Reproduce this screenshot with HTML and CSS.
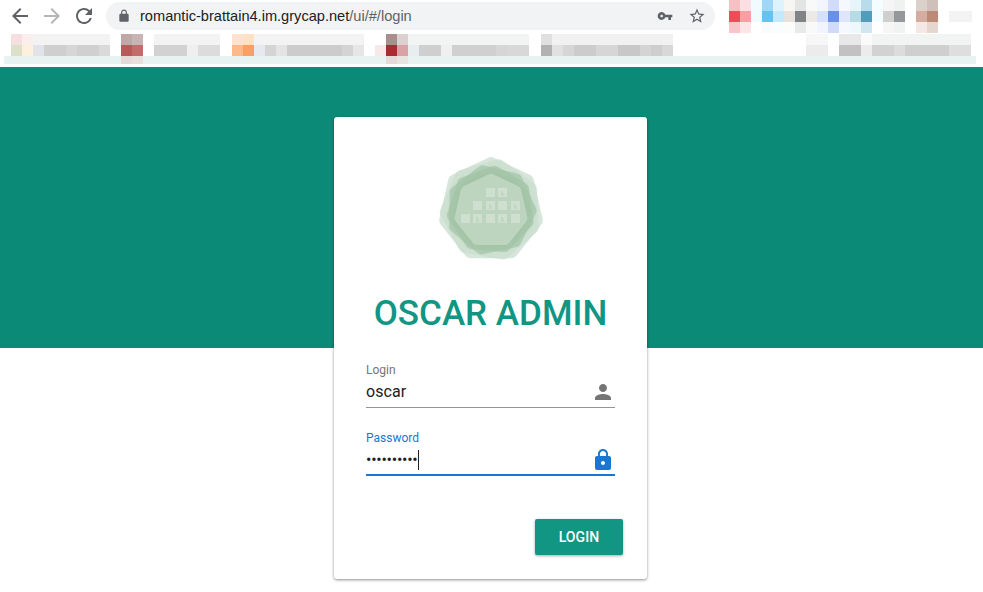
FILE: index.html
```html
<!DOCTYPE html>
<html lang="en">
<head>
  <meta charset="UTF-8">
  <title>OSCAR Admin</title>
  <link rel="stylesheet" href="styles.css">
</head>
<body>

  <header class="browser">
    <div class="toolbar">
      <svg class="nav-icon" viewBox="0 0 24 24"><path d="M20 11H7.83l5.59-5.59L12 4l-8 8 8 8 1.41-1.41L7.83 13H20v-2z"/></svg>
      <svg class="nav-icon nav-off" viewBox="0 0 24 24"><path d="M12 4l-1.41 1.41L16.17 11H4v2h12.17l-5.58 5.59L12 20l8-8z"/></svg>
      <svg class="nav-icon" viewBox="0 0 24 24"><path d="M17.65 6.35A7.958 7.958 0 0 0 12 4c-4.42 0-7.99 3.58-7.99 8s3.57 8 7.99 8c3.73 0 6.84-2.55 7.73-6h-2.08A5.99 5.99 0 0 1 12 18c-3.31 0-6-2.69-6-6s2.69-6 6-6c1.66 0 3.14.69 4.22 1.78L13 11h7V4l-2.35 2.35z"/></svg>
      <div class="omnibox">
        <svg class="lock-icon" viewBox="0 0 24 24"><path d="M18 8h-1V6c0-2.76-2.24-5-5-5S7 3.24 7 6v2H6c-1.1 0-2 .9-2 2v10c0 1.1.9 2 2 2h12c1.1 0 2-.9 2-2V10c0-1.1-.9-2-2-2zM9 6c0-1.66 1.34-3 3-3s3 1.34 3 3v2H9V6z"/></svg>
        <span class="url">romantic-brattain4.im.grycap.net<span class="url-path">/ui/#/login</span></span>
        <svg class="key-icon" viewBox="0 0 24 24"><path d="M12.65 10A5.99 5.99 0 0 0 7 6c-3.31 0-6 2.69-6 6s2.69 6 6 6a5.99 5.99 0 0 0 5.65-4H17v4h4v-4h2v-4H12.65zM7 14c-1.1 0-2-.9-2-2s.9-2 2-2 2 .9 2 2-.9 2-2 2z"/></svg>
        <svg class="star-icon" viewBox="0 0 24 24"><path d="M22 9.24l-7.19-.62L12 2 9.19 8.63 2 9.24l5.46 4.73L5.82 21 12 17.27 18.18 21l-1.63-7.03L22 9.24zM12 15.4l-3.76 2.27 1-4.28-3.32-2.88 4.38-.38L12 6.1l1.71 4.04 4.38.38-3.32 2.88 1 4.28L12 15.4z"/></svg>
      </div>
      <!-- blurred extension icons -->
      <svg class="mosaic-top" width="243" height="33" shape-rendering="crispEdges">
        <rect x="0" y="0" width="11" height="11" fill="#f7c0c4"/><rect x="0" y="11" width="11" height="11" fill="#ee4d57"/><rect x="0" y="22" width="11" height="11" fill="#f9c5ca"/>
        <rect x="11" y="0" width="11" height="11" fill="#fcdfe2"/><rect x="11" y="11" width="11" height="11" fill="#fa9ea4"/><rect x="11" y="22" width="11" height="11" fill="#fde4e6"/>
        <rect x="22" y="0" width="11" height="22" fill="#f0fbff"/>
        <rect x="33" y="0" width="11" height="11" fill="#9fd8f7"/><rect x="33" y="11" width="11" height="11" fill="#66c2f0"/><rect x="33" y="22" width="11" height="11" fill="#f8fcff"/>
        <rect x="44" y="0" width="11" height="11" fill="#dff3fd"/><rect x="44" y="11" width="11" height="11" fill="#c4e9fb"/><rect x="44" y="22" width="11" height="11" fill="#fafdff"/>
        <rect x="55" y="0" width="11" height="11" fill="#f8f6f3"/><rect x="55" y="11" width="11" height="11" fill="#e8e2de"/><rect x="55" y="22" width="11" height="11" fill="#fcfcfb"/>
        <rect x="66" y="0" width="11" height="11" fill="#e3e5e5"/><rect x="66" y="11" width="11" height="11" fill="#808486"/><rect x="66" y="22" width="11" height="11" fill="#e8eaea"/>
        <rect x="77" y="0" width="11" height="11" fill="#f9f9f9"/><rect x="77" y="11" width="11" height="11" fill="#ece9e7"/><rect x="77" y="22" width="11" height="11" fill="#f9f9f9"/>
        <rect x="88" y="0" width="11" height="11" fill="#f2f5fe"/><rect x="88" y="11" width="11" height="11" fill="#d5e0fb"/><rect x="88" y="22" width="11" height="11" fill="#f1f4fe"/>
        <rect x="99" y="0" width="11" height="11" fill="#d0dcf8"/><rect x="99" y="11" width="11" height="11" fill="#6890e4"/><rect x="99" y="22" width="11" height="11" fill="#cfdbf8"/>
        <rect x="110" y="0" width="11" height="11" fill="#f5f8fe"/><rect x="110" y="11" width="11" height="11" fill="#dfe6fc"/><rect x="110" y="22" width="11" height="11" fill="#f5f8fe"/>
        <rect x="121" y="0" width="11" height="11" fill="#e6f5f9"/><rect x="121" y="11" width="11" height="11" fill="#b5dce5"/><rect x="121" y="22" width="11" height="11" fill="#eef7fa"/>
        <rect x="132" y="0" width="11" height="11" fill="#b9dcec"/><rect x="132" y="11" width="11" height="11" fill="#539cbc"/><rect x="132" y="22" width="11" height="11" fill="#d0e7f2"/>
        <rect x="143" y="0" width="11" height="22" fill="#f3fcff"/>
        <rect x="154" y="0" width="11" height="11" fill="#f5f5f5"/><rect x="154" y="11" width="11" height="11" fill="#cfcfcf"/><rect x="154" y="22" width="11" height="11" fill="#f6f6f6"/>
        <rect x="165" y="0" width="11" height="11" fill="#f0f1f1"/><rect x="165" y="11" width="11" height="11" fill="#94989b"/><rect x="165" y="22" width="11" height="11" fill="#f1f2f2"/>
        <rect x="187" y="0" width="11" height="11" fill="#dcd0cb"/><rect x="187" y="11" width="11" height="11" fill="#d3aea0"/><rect x="187" y="22" width="11" height="11" fill="#f5e8e4"/>
        <rect x="198" y="0" width="11" height="11" fill="#cfc0b9"/><rect x="198" y="11" width="11" height="11" fill="#bd8a78"/><rect x="198" y="22" width="11" height="11" fill="#e5d6d0"/>
        <rect x="220" y="11" width="23" height="11" fill="#f2f3f2"/>
      </svg>
    </div>
    <!-- blurred bookmarks bar -->
    <svg class="mosaic-bar" width="983" height="33" shape-rendering="crispEdges">
      <rect x="4" y="22" width="972" height="8" fill="#e8f2f0"/>
      <rect x="11" y="0" width="11" height="11" fill="#f5dfe0"/><rect x="11" y="11" width="11" height="11" fill="#dde0c8"/>
      <rect x="22" y="0" width="11" height="11" fill="#fbeeef"/><rect x="22" y="11" width="11" height="11" fill="#fdf0dc"/>
      <rect x="33" y="0" width="77" height="11" fill="#f3f3f3"/>
      <rect x="33" y="11" width="11" height="11" fill="#e1e3e8"/><rect x="44" y="11" width="22" height="11" fill="#cfcfcf"/><rect x="66" y="11" width="11" height="11" fill="#d6d6d6"/><rect x="77" y="11" width="22" height="11" fill="#d0d0d0"/><rect x="99" y="11" width="11" height="11" fill="#dadada"/>
      <rect x="121" y="0" width="11" height="11" fill="#c0a8a8"/><rect x="121" y="11" width="11" height="11" fill="#b75a5a"/><rect x="121" y="22" width="11" height="8" fill="#e6dad8"/>
      <rect x="132" y="0" width="11" height="11" fill="#c8b4b4"/><rect x="132" y="11" width="11" height="11" fill="#c46c6c"/><rect x="132" y="22" width="11" height="8" fill="#e8dedc"/>
      <rect x="154" y="0" width="66" height="11" fill="#f3f3f3"/>
      <rect x="154" y="11" width="33" height="11" fill="#d2d2d2"/><rect x="187" y="11" width="11" height="11" fill="#efefef"/><rect x="198" y="11" width="22" height="11" fill="#dcdcdc"/>
      <rect x="232" y="0" width="11" height="11" fill="#fde3cf"/><rect x="232" y="11" width="11" height="11" fill="#fdb98a"/>
      <rect x="243" y="0" width="11" height="11" fill="#fde0c6"/><rect x="243" y="11" width="11" height="11" fill="#fb9f63"/>
      <rect x="254" y="0" width="110" height="11" fill="#f3f3f3"/>
      <rect x="254" y="11" width="11" height="11" fill="#e6e9ef"/><rect x="265" y="11" width="11" height="11" fill="#d4d4d4"/><rect x="276" y="11" width="11" height="11" fill="#e4e4e4"/><rect x="287" y="11" width="55" height="11" fill="#cccccc"/><rect x="342" y="11" width="11" height="11" fill="#d4d4d4"/><rect x="353" y="11" width="11" height="11" fill="#e6e6e6"/>
      <rect x="375" y="11" width="11" height="11" fill="#f9e8e8"/>
      <rect x="386" y="0" width="11" height="11" fill="#a98e8e"/><rect x="386" y="11" width="11" height="11" fill="#a52f30"/><rect x="386" y="22" width="11" height="8" fill="#e6dad8"/>
      <rect x="397" y="0" width="11" height="11" fill="#ddd0d0"/><rect x="397" y="11" width="11" height="11" fill="#d9a3a5"/><rect x="397" y="22" width="11" height="8" fill="#e8e4e2"/>
      <rect x="408" y="0" width="121" height="11" fill="#f2f3f3"/>
      <rect x="408" y="11" width="11" height="11" fill="#e8eef0"/><rect x="419" y="11" width="22" height="11" fill="#cfcfcf"/><rect x="441" y="11" width="11" height="11" fill="#f0f0f0"/><rect x="452" y="11" width="44" height="11" fill="#d0d0d0"/><rect x="496" y="11" width="11" height="11" fill="#d6d6d6"/><rect x="507" y="11" width="22" height="11" fill="#d8d8d8"/>
      <rect x="541" y="0" width="11" height="11" fill="#e0e0e0"/><rect x="541" y="11" width="11" height="11" fill="#b2b2b2"/>
      <rect x="552" y="0" width="121" height="11" fill="#f0f1f0"/>
      <rect x="552" y="11" width="11" height="11" fill="#e2e0e0"/><rect x="563" y="11" width="11" height="11" fill="#d6d6d6"/><rect x="574" y="11" width="22" height="11" fill="#cccccc"/><rect x="596" y="11" width="22" height="11" fill="#d6d6d6"/><rect x="618" y="11" width="22" height="11" fill="#c8c8c8"/><rect x="640" y="11" width="11" height="11" fill="#d4d4d4"/><rect x="651" y="11" width="11" height="11" fill="#cecece"/><rect x="662" y="11" width="11" height="11" fill="#d8d8d8"/>
      <rect x="806" y="0" width="22" height="11" fill="#f7f7f7"/><rect x="806" y="11" width="22" height="11" fill="#ececec"/>
      <rect x="839" y="0" width="22" height="11" fill="#e8e8e8"/><rect x="839" y="11" width="22" height="11" fill="#c2c2c2"/>
      <rect x="861" y="0" width="11" height="11" fill="#fafafa"/><rect x="861" y="11" width="11" height="11" fill="#ececec"/>
      <rect x="872" y="0" width="99" height="11" fill="#f2f3f3"/>
      <rect x="872" y="11" width="22" height="11" fill="#d2d2d2"/><rect x="894" y="11" width="11" height="11" fill="#dcdcdc"/><rect x="905" y="11" width="44" height="11" fill="#cfcfcf"/><rect x="949" y="11" width="22" height="11" fill="#dedede"/>
    </svg>
  </header>

  <main class="page">
    <form class="card">
      <svg class="logo" width="112" height="112" viewBox="-56 -56 112 112">
        <defs>
          <polygon id="hepta" points="0,-50 39.1,-31.2 48.7,11.1 21.7,45 -21.7,45 -48.7,11.1 -39.1,-31.2"/>
        </defs>
        <use href="#hepta" class="logo-outer" transform="translate(0 1) scale(.93)"/>
        <use href="#hepta" class="logo-outer" transform="translate(0 1) scale(.9) rotate(10)"/>
        <use href="#hepta" class="logo-ring" transform="translate(0 1) scale(.8) rotate(-12)"/>
        <use href="#hepta" class="logo-ring" transform="translate(0 1) scale(.78) rotate(5)"/>
        <use href="#hepta" class="logo-inner" transform="translate(0 2) scale(.62)"/>
        <g class="logo-boxes">
          <rect x="-5" y="-21" width="9" height="9"/><rect x="7" y="-21" width="9" height="9"/>
          <rect x="-18" y="-8" width="9" height="9"/><rect x="-5" y="-8" width="9" height="9"/><rect x="7" y="-8" width="9" height="9"/><rect x="20" y="-8" width="9" height="9"/>
          <rect x="-30" y="5" width="9" height="9"/><rect x="-18" y="5" width="9" height="9"/><rect x="-5" y="5" width="9" height="9"/><rect x="7" y="5" width="9" height="9"/><rect x="20" y="5" width="9" height="9"/>
        </g>
        <g class="logo-lambda">
          <text x="11.5" y="-13.5">λ</text>
          <text x="-0.5" y="-0.5">λ</text><text x="24.5" y="-0.5">λ</text>
          <text x="-13.5" y="12.5">λ</text><text x="11.5" y="12.5">λ</text>
        </g>
      </svg>

      <h1 class="title">OSCAR ADMIN</h1>

      <div class="field">
        <div class="field-label">Login</div>
        <div class="field-row">
          <span class="field-value">oscar</span>
          <svg class="field-icon" viewBox="0 0 24 24"><path d="M12 12c2.21 0 4-1.79 4-4s-1.79-4-4-4-4 1.79-4 4 1.79 4 4 4zm0 2c-2.67 0-8 1.34-8 4v2h16v-2c0-2.66-5.33-4-8-4z"/></svg>
        </div>
      </div>

      <div class="field field-focused">
        <div class="field-label">Password</div>
        <div class="field-row">
          <span class="field-value field-dots">••••••••••</span><span class="caret"></span>
          <svg class="field-icon" viewBox="0 0 24 24"><path d="M18 8h-1V6c0-2.76-2.24-5-5-5S7 3.24 7 6v2H6c-1.1 0-2 .9-2 2v10c0 1.1.9 2 2 2h12c1.1 0 2-.9 2-2V10c0-1.1-.9-2-2-2zm-6 9c-1.1 0-2-.9-2-2s.9-2 2-2 2 .9 2 2-.9 2-2 2zm3.1-9H8.9V6c0-1.71 1.39-3.1 3.1-3.1 1.71 0 3.1 1.39 3.1 3.1v2z"/></svg>
        </div>
      </div>

      <div class="actions">
        <button class="login-btn" type="button">LOGIN</button>
      </div>
    </form>
  </main>

</body>
</html>
```

FILE: styles.css
```css
* {
  box-sizing: border-box;
}

html, body {
  margin: 0;
  height: 100%;
  overflow: hidden;
  background: #fff;
  font-family: Roboto, sans-serif;
}

/* browser chrome */
.browser {
  height: 67px;
  background: #fff;
}

.toolbar {
  display: flex;
  align-items: flex-start;
  height: 34px;
  padding-left: 8px;
}

.nav-icon {
  width: 24px;
  height: 24px;
  margin: 4px 8px 0 0;
  fill: #5f6368;
}

.nav-off {
  fill: #b4b6b9;
}

.omnibox {
  display: flex;
  align-items: center;
  width: 609px;
  height: 28px;
  margin: 2px 14px 0 2px;
  padding: 0 8px 0 11px;
  border-radius: 14px;
  background: #f1f3f4;
}

.lock-icon {
  width: 14px;
  height: 14px;
  margin-right: 9px;
  fill: #5f6368;
}

.url {
  flex: 1;
  font-family: "Liberation Sans", Arial, sans-serif;
  font-size: 14.6px;
  color: #202124;
}

.url-path {
  color: #5f6368;
}

.key-icon {
  width: 16px;
  height: 16px;
  margin-right: 15px;
  fill: #5f6368;
}

.star-icon {
  width: 18px;
  height: 18px;
  margin-right: 1px;
  fill: #5f6368;
}

.mosaic-top,
.mosaic-bar {
  display: block;
}

/* login page */
.page {
  height: 525px;
  padding-top: 50px;
  background: linear-gradient(#0c8a78 281px, #fff 281px);
}

.card {
  display: flex;
  flex-direction: column;
  width: 313px;
  height: 462px;
  margin: 0 0 0 334px;
  padding: 36px 32px 0;
  border-radius: 3px;
  background: #fff;
  box-shadow: 0 1px 3px rgba(0, 0, 0, .45);
}

.logo {
  display: block;
  align-self: center;
}

.logo-outer {
  fill: #c9ddcd;
  fill-opacity: .75;
  stroke: #c9ddcd;
  stroke-opacity: .75;
  stroke-width: 14;
  stroke-linejoin: round;
  paint-order: stroke;
}

.logo-ring {
  fill: #a3c3a6;
  fill-opacity: .7;
  stroke: #a3c3a6;
  stroke-opacity: .7;
  stroke-width: 14;
  stroke-linejoin: round;
}

.logo-inner {
  fill: #bdd5be;
  stroke: #bdd5be;
  stroke-width: 20;
  stroke-linejoin: round;
}

.logo-boxes {
  fill: #fff;
  fill-opacity: .28;
}

.logo-lambda {
  font-family: Roboto, sans-serif;
  font-size: 7px;
  text-anchor: middle;
  fill: #b3cfb5;
}

.title {
  margin: 29px 0 0;
  font-size: 35px;
  font-weight: 500;
  line-height: 40px;
  text-align: center;
  white-space: nowrap;
  color: #129684;
}

.field {
  height: 45px;
  margin-top: 29px;
  border-bottom: 1px solid #949494;
  color: #757575;
}

.field + .field {
  margin-top: 23px;
}

.field-label {
  font-size: 12px;
  line-height: 14px;
}

.field-row {
  display: flex;
  align-items: center;
  height: 29px;
}

.field-value {
  font-size: 16px;
  letter-spacing: .1px;
  color: #212121;
}

.field-dots {
  letter-spacing: -.25px;
  line-height: 16px;
}

.caret {
  width: 1px;
  height: 20px;
  margin-left: 1px;
  background: #212121;
}

.field-icon {
  width: 24px;
  height: 24px;
  margin-left: auto;
  fill: #757575;
}

.field-focused {
  border-bottom: 2px solid #1976d2;
  color: #1976d2;
}

.field-focused .field-icon {
  fill: #1976d2;
}

.actions {
  display: flex;
  justify-content: flex-end;
  margin: 43px -8px 0 0;
}

.login-btn {
  width: 88px;
  height: 36px;
  border: 0;
  border-radius: 2px;
  background: #129684;
  box-shadow: 0 1px 3px rgba(0, 0, 0, .35);
  font-family: Roboto, sans-serif;
  font-size: 14px;
  font-weight: 500;
  letter-spacing: .1px;
  color: #fff;
}
```
